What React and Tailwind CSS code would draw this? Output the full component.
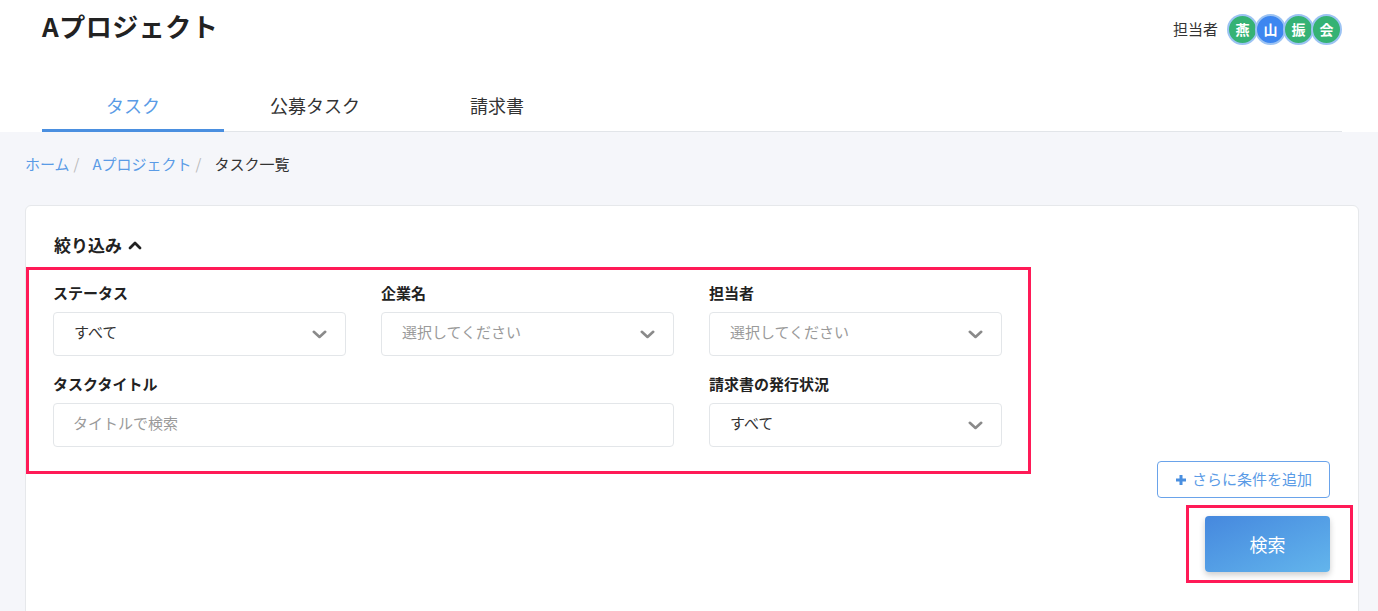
import React from "react";

const members = [
  { ch: "燕", bg: "bg-[#35b274]" },
  { ch: "山", bg: "bg-[#3d86f0]" },
  { ch: "振", bg: "bg-[#35b274]" },
  { ch: "会", bg: "bg-[#35b274]" },
];

const tabs = [
  { label: "タスク", active: true },
  { label: "公募タスク" },
  { label: "請求書" },
];

function Chevron() {
  return (
    <svg width="15" height="9" viewBox="0 0 15 9" fill="none">
      <path d="M1.8 1.8 L7.5 7 L13.2 1.8" stroke="#8a8a8a" strokeWidth="2.6" strokeLinecap="round" strokeLinejoin="round" />
    </svg>
  );
}

function Select({ value, placeholder }) {
  return (
    <div className="h-[44px] flex items-center justify-between pl-[20px] pr-[18px] bg-white border border-[#e3e6e9] rounded-[4px]">
      <span className={`text-[15px] -mt-[3px] ${placeholder ? "text-[#9a9a9a]" : "text-[#333]"}`}>
        {value}
      </span>
      <Chevron />
    </div>
  );
}

function Field({ label, children, span }) {
  return (
    <div className={span ? "col-span-2" : ""}>
      <div className="text-[15px] font-bold text-[#222] leading-[20px] mb-[9px]">{label}</div>
      {children}
    </div>
  );
}

export default function App() {
  return (
    <div className="min-h-[611px] bg-[#f5f6fa] font-['Noto_Sans_CJK_JP','Noto_Sans',sans-serif] text-[#222]">
      {/* ── Header ─────────────────────────────── */}
      <header className="bg-white">
        <div className="flex justify-between items-start pl-[42px] pr-[36px] pt-[8px]">
          <h1 className="text-[26px] font-bold leading-[36px] tracking-[0.5px]">Aプロジェクト</h1>
          <div className="flex items-center mt-[6px]">
            <span className="text-[15px] text-[#333] mr-[9px]">担当者</span>
            <div className="flex">
              {members.map((m, i) => (
                <div
                  key={i}
                  className={`w-[31px] h-[31px] rounded-full border-2 border-[#9cc3f3] ${m.bg} ${i ? "-ml-[3px]" : ""} flex items-center justify-center text-white text-[14px] font-bold`}
                >
                  {m.ch}
                </div>
              ))}
            </div>
          </div>
        </div>
        <nav className="flex ml-[42px] mr-[36px] mt-[36px] border-b border-[#e2e5e9]">
          {tabs.map((t) => (
            <div
              key={t.label}
              className={`w-[182px] h-[51px] flex items-center justify-center text-[18px] border-b-[3px] -mb-px ${
                t.active ? "border-[#4a8fe0] text-[#5a9be6]" : "border-transparent text-[#333]"
              }`}
            >
              {t.label}
            </div>
          ))}
        </nav>
      </header>

      {/* ── Breadcrumb ─────────────────────────── */}
      <div className="pl-[25px] pt-[22px] text-[15px] leading-[20px] flex items-center">
        <span className="text-[#5a9be6]">ホーム</span>
        <span className="text-[#bbb] ml-[4px] mr-[13px]">/</span>
        <span className="text-[#5a9be6]">Aプロジェクト</span>
        <span className="text-[#bbb] ml-[4px] mr-[13px]">/</span>
        <span className="text-[#333]">タスク一覧</span>
      </div>

      {/* ── Filter card ────────────────────────── */}
      <div className="ml-[25px] mr-[19px] mt-[31px] bg-white border border-[#e6e8eb] rounded-[6px] px-[28px] pt-[28px] pb-[40px]">
        <div className="flex items-center text-[17px] font-bold leading-[22px] mb-[11px]">
          絞り込み
          <svg className="ml-[6px]" width="14" height="10" viewBox="0 0 14 10" fill="none">
            <path d="M2 8 L7 3 L12 8" stroke="#222" strokeWidth="2.8" strokeLinecap="round" strokeLinejoin="round" />
          </svg>
        </div>

        <div className="-ml-[28px] w-[1005px] border-[3px] border-[#ff1a57] pl-[24px] pt-[13px] pb-[24px]">
          <div className="grid grid-cols-[293px_293px_293px] gap-x-[35px] gap-y-[18px]">
            <Field label="ステータス">
              <Select value="すべて" />
            </Field>
            <Field label="企業名">
              <Select value="選択してください" placeholder />
            </Field>
            <Field label="担当者">
              <Select value="選択してください" placeholder />
            </Field>
            <Field label="タスクタイトル" span>
              <div className="h-[44px] flex items-center pl-[19px] border border-[#e3e6e9] rounded-[4px]">
                <span className="text-[15px] text-[#9a9a9a] -mt-[3px]">タイトルで検索</span>
              </div>
            </Field>
            <Field label="請求書の発行状況">
              <Select value="すべて" />
            </Field>
          </div>
        </div>

        <div className="flex flex-col items-end -mt-[13px]">
          <button className="w-[173px] h-[37px] flex items-center justify-center border border-[#6aa3ea] rounded-[4px] text-[15px] text-[#5a9be6] bg-white">
            <svg className="mr-[5px]" width="12" height="12" viewBox="0 0 12 12">
              <path d="M6 1 V11 M1 6 H11" stroke="#4a8fe0" strokeWidth="3" />
            </svg>
            さらに条件を追加
          </button>
          <div className="mt-[7px] -mr-[23px] border-[3px] border-[#ff1a57] pl-[16px] pr-[20px] py-[8px]">
            <button className="w-[125px] h-[56px] rounded-[4px] bg-gradient-to-br from-[#4688de] to-[#63b5ec] text-white text-[18px] shadow-[0_3px_6px_rgba(0,0,0,0.2)]">
              検索
            </button>
          </div>
        </div>
      </div>
    </div>
  );
}
